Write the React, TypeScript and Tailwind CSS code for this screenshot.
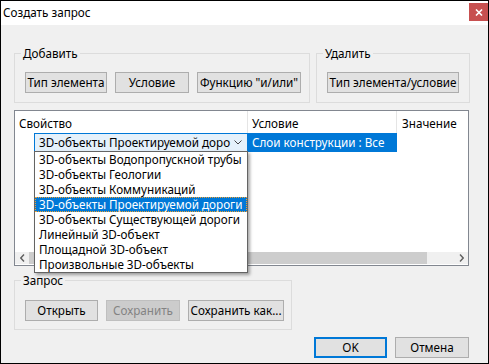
import React from "react";

const font = { fontFamily: '"Noto Sans", "Liberation Sans", sans-serif' };

function Btn({ w, children, disabled }: { w: string; children: React.ReactNode; disabled?: boolean }) {
  return (
    <div
      className={`${w} h-[21px] flex items-center justify-center text-[11.7px] leading-none whitespace-nowrap border ${
        disabled ? "bg-[#cccccc] border-[#bfbfbf] text-[#838383]" : "bg-[#e1e1e1] border-[#adadad] text-black"
      }`}
    >
      {children}
    </div>
  );
}

function Group({ w, label, children }: { w: string; label: string; children: React.ReactNode }) {
  return (
    <div className={`relative ${w} h-[50px] border border-[#dcdcdc] flex items-start gap-0 pl-[10px] pt-[18px]`}>
      <span className="absolute left-[6px] -top-[9px] px-[2px] bg-[#f0f0f0] text-[11.7px] leading-[16px] text-black whitespace-nowrap">
        {label}
      </span>
      {children}
    </div>
  );
}

const items = [
  "3D-объекты Водопропускной трубы",
  "3D-объекты Геологии",
  "3D-объекты Коммуникаций",
  "3D-объекты Проектируемой дороги",
  "3D-объекты Существующей дороги",
  "Линейный 3D-объект",
  "Площадной 3D-объект",
  "Произвольные 3D-объекты",
];

export default function App() {
  return (
    <div className="relative w-[489px] h-[364px] bg-[#f0f0f0] border border-black overflow-hidden text-black" style={font}>
      {/* title bar */}
      <div className="h-[24px] bg-white flex items-start justify-between">
        <span className="pl-[2px] pt-[3px] text-[11.7px] leading-[16px]">Создать запрос</span>
        <div className="mt-[2px] w-[19px] h-[18px] bg-[#c75050] flex items-center justify-center">
          <svg width="8" height="7" viewBox="0 0 8 7">
            <path d="M1 0.5 L7 6.5 M7 0.5 L1 6.5" stroke="white" strokeWidth="1.6" />
          </svg>
        </div>
      </div>

      {/* add / delete groups */}
      <div className="flex gap-[6px] pl-[13px] mt-[28px]">
        <Group w="w-[296px]" label="Добавить">
          <div className="flex gap-[8px]">
            <Btn w="w-[82px]">Тип элемента</Btn>
            <Btn w="w-[74px]">Условие</Btn>
            <Btn w="w-[104px]">Функцию "и/или"</Btn>
          </div>
        </Group>
        <Group w="w-[154px]" label="Удалить">
          <Btn w="w-[132px]">Тип элемента/условие</Btn>
        </Group>
      </div>

      {/* table */}
      <div className="ml-[13px] mt-[7px] w-[455px] h-[156px] border border-[#828790] bg-white flex flex-col">
        <div className="h-[22px] flex text-[11.7px] leading-[16px] shrink-0">
          <div className="w-[233px] border-r border-[#e5e5e5] pl-[4px] pt-[4px]">Свойство</div>
          <div className="w-[149px] border-r border-[#e5e5e5] pl-[4px] pt-[4px]">Условие</div>
          <div className="pl-[5px] pt-[4px]">Значение</div>
        </div>
        <div className="h-[19px] flex shrink-0">
          <div className="w-[19px]" />
          <div className="w-[214px] h-[19px] border border-[#0078d7] bg-[#e5f1fb] flex items-center justify-between pl-[4px] pr-[5px] text-[11.7px] leading-none">
            <span className="whitespace-nowrap">3D-объекты Проектируемой доро</span>
            <svg width="8" height="5" viewBox="0 0 8 5" className="shrink-0">
              <path d="M0.5 0.5 L4 4 L7.5 0.5" stroke="#444" fill="none" strokeWidth="1" />
            </svg>
          </div>
          <div className="w-[149px] h-[19px] bg-[#0078d7] text-white text-[11.7px] leading-none flex items-center pl-[4px]">
            Слои конструкции : Все
          </div>
        </div>
        <div className="mt-auto h-[12px] mb-[1px] flex items-stretch bg-[#f0f0f0]">
          <div className="w-[14px] flex items-center justify-center">
            <svg width="5" height="8" viewBox="0 0 5 8">
              <path d="M4 0.5 L0.8 4 L4 7.5" stroke="#606060" fill="none" strokeWidth="1.4" />
            </svg>
          </div>
          <div className="w-[398px] bg-[#cdcdcd]" />
          <div className="flex-1" />
          <div className="w-[14px] flex items-center justify-center">
            <svg width="5" height="8" viewBox="0 0 5 8">
              <path d="M1 0.5 L4.2 4 L1 7.5" stroke="#606060" fill="none" strokeWidth="1.4" />
            </svg>
          </div>
        </div>
      </div>

      {/* query group */}
      <div className="pl-[13px] mt-[14px]">
        <Group w="w-[278px]" label="Запрос">
          <div className="flex gap-[8px] pt-[1px]">
            <Btn w="w-[73px]">Открыть</Btn>
            <Btn w="w-[74px]" disabled>
              Сохранить
            </Btn>
            <Btn w="w-[96px]">Сохранить как...</Btn>
          </div>
        </Group>
      </div>

      {/* ok / cancel */}
      <div className="flex gap-[8px] pl-[313px] mt-[7px]">
        <div className="w-[73px] h-[21px] border-2 border-[#0078d7] bg-[#e1e1e1] flex items-center justify-center text-[11.7px] leading-none">
          OK
        </div>
        <Btn w="w-[74px]">Отмена</Btn>
      </div>

      {/* dropdown list overlay */}
      <div className="absolute left-[33px] top-[150px] w-[214px] border border-[#646464] bg-white shadow-[2px_2px_3px_rgba(0,0,0,0.35)]">
        {items.map((t, i) => (
          <div
            key={t}
            className={`h-[15px] pl-[4px] text-[11.7px] leading-[15px] whitespace-nowrap overflow-hidden ${
              i === 3 ? "bg-[#0078d7] text-white outline-1 outline-dotted outline-[#f0a030] -outline-offset-1" : ""
            }`}
          >
            {t}
          </div>
        ))}
      </div>
    </div>
  );
}
